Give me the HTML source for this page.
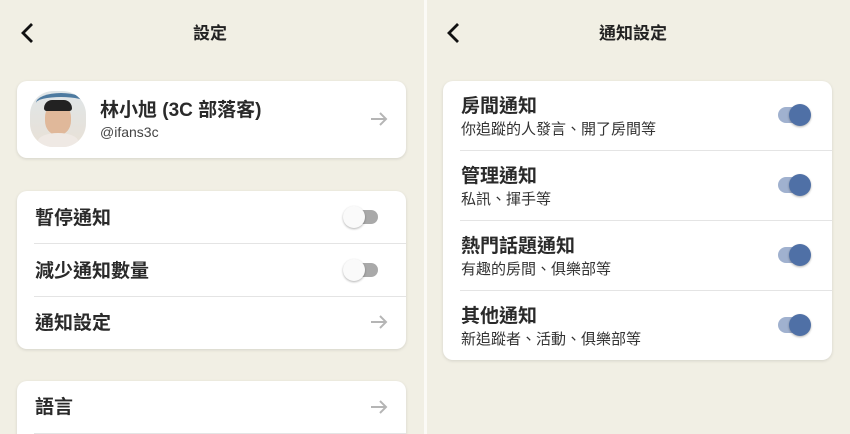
<!DOCTYPE html><html><head><meta charset="utf-8"><style>
*{margin:0;padding:0;box-sizing:border-box}
html,body{width:850px;height:434px;overflow:hidden}
body{background:#f1efe4;position:relative;font-family:"Liberation Sans","Noto Sans CJK TC",sans-serif;color:#222}
.a{position:absolute}
.card{position:absolute;background:#fff;border-radius:10px;box-shadow:0 1px 3px rgba(0,0,0,.12)}
.t{position:absolute;font-size:19px;font-weight:bold;color:#2a2a2a;margin-top:-3px}
.hd{position:absolute;font-size:17px;font-weight:bold;top:19px}
.div{position:absolute;height:1px;background:#e4e4e4}
.arr{position:absolute}
.off{position:absolute;width:26px;height:14px;border-radius:7px;background:#a9a9a9}
.off::before{content:"";position:absolute;left:-9px;top:-4px;width:22px;height:22px;border-radius:50%;background:#fafafa;box-shadow:0 1px 2px rgba(0,0,0,.3)}
.on{position:absolute;width:32px;height:16px;border-radius:8px;background:#a0b1cf}
.on::before{content:"";position:absolute;left:11px;top:-3px;width:22px;height:22px;border-radius:50%;background:#4f70a6;box-shadow:0 1px 2px rgba(0,0,0,.3)}
.s{position:absolute;font-size:15px;color:#333;margin-top:-2px}
</style></head><body>
<div class="a" style="left:424px;top:0;width:3px;height:434px;background:#fbfaf6"></div>
<svg class="a" style="left:18px;top:21px" width="20" height="24"><path d="M14 3 L5 12 L14 21" stroke="#111" stroke-width="2.8" fill="none"/></svg>
<div class="hd" style="left:193px">設定</div>
<svg class="a" style="left:444px;top:21px" width="20" height="24"><path d="M14 3 L5 12 L14 21" stroke="#111" stroke-width="2.8" fill="none"/></svg>
<div class="hd" style="left:599px">通知設定</div>

<div class="card" style="left:17px;top:81px;width:389px;height:77px"></div>
<div class="a" style="left:30px;top:91px;width:56px;height:56px;border-radius:42%;overflow:hidden;background:linear-gradient(180deg,#dfe5e8 0%,#e9e1d6 100%)">
<div class="a" style="left:6px;top:2px;width:50px;height:20px;border-top:4px solid #4d7aa0;border-radius:50%"></div>
<div class="a" style="left:15px;top:12px;width:26px;height:32px;border-radius:45%;background:#e0b89a"></div>
<div class="a" style="left:14px;top:9px;width:28px;height:11px;border-radius:12px 12px 4px 4px;background:#222"></div>
<div class="a" style="left:8px;top:42px;width:40px;height:16px;border-radius:50% 50% 0 0;background:#efe9e4"></div></div>
<div class="a" style="left:100px;top:95px;font-size:19px;font-weight:bold;color:#2a2a2a">林小旭 (3C 部落客)</div>
<div class="a" style="left:100px;top:124px;font-size:14px;color:#444">@ifans3c</div>
<svg class="arr" style="left:370px;top:111px" width="18" height="16"><path d="M1 8H16M10 2L16 8L10 14" stroke="#b5b5b5" stroke-width="2" fill="none"/></svg>

<div class="card" style="left:17px;top:191px;width:389px;height:158px"></div>
<div class="t" style="left:35px;top:206px">暫停通知</div>
<div class="off" style="left:352px;top:210px"></div>
<div class="div" style="left:34px;top:243px;width:372px"></div>
<div class="t" style="left:35px;top:259px">減少通知數量</div>
<div class="off" style="left:352px;top:263px"></div>
<div class="div" style="left:34px;top:296px;width:372px"></div>
<div class="t" style="left:35px;top:311px">通知設定</div>
<svg class="arr" style="left:370px;top:314px" width="18" height="16"><path d="M1 8H16M10 2L16 8L10 14" stroke="#b5b5b5" stroke-width="2" fill="none"/></svg>

<div class="card" style="left:17px;top:381px;width:389px;height:70px"></div>
<div class="t" style="left:35px;top:395px">語言</div>
<svg class="arr" style="left:370px;top:399px" width="18" height="16"><path d="M1 8H16M10 2L16 8L10 14" stroke="#b5b5b5" stroke-width="2" fill="none"/></svg>
<div class="div" style="left:34px;top:433px;width:372px"></div>

<div class="card" style="left:443px;top:81px;width:389px;height:279px"></div>
<div class="t" style="left:461px;top:94px">房間通知</div><div class="s" style="left:461px;top:120px">你追蹤的人發言、開了房間等</div>
<div class="on" style="left:778px;top:107px"></div>
<div class="div" style="left:460px;top:150px;width:372px"></div>
<div class="t" style="left:461px;top:164px">管理通知</div><div class="s" style="left:461px;top:190px">私訊、揮手等</div>
<div class="on" style="left:778px;top:177px"></div>
<div class="div" style="left:460px;top:220px;width:372px"></div>
<div class="t" style="left:461px;top:234px">熱門話題通知</div><div class="s" style="left:461px;top:260px">有趣的房間、俱樂部等</div>
<div class="on" style="left:778px;top:247px"></div>
<div class="div" style="left:460px;top:290px;width:372px"></div>
<div class="t" style="left:461px;top:304px">其他通知</div><div class="s" style="left:461px;top:330px">新追蹤者、活動、俱樂部等</div>
<div class="on" style="left:778px;top:317px"></div>
</body></html>
